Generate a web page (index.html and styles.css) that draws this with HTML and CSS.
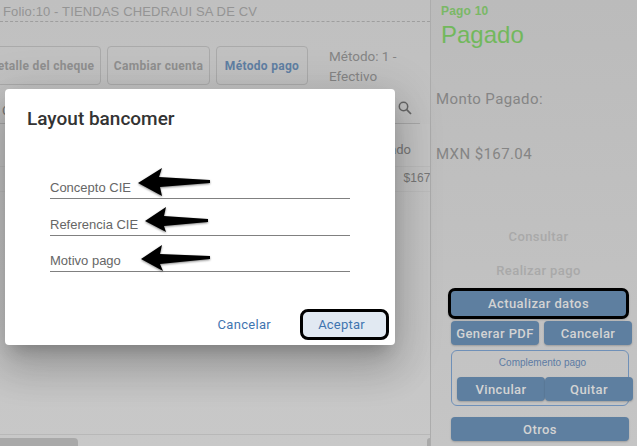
FILE: index.html
```html
<!DOCTYPE html>
<html lang="es">
<head>
<meta charset="utf-8">
<title>Pago 10</title>
<link rel="stylesheet" href="styles.css">
</head>
<body>
<div class="page">
  <main class="main">
    <h1 class="folio">Folio:10 - TIENDAS CHEDRAUI SA DE CV</h1>
    <div class="toolbar">
      <button class="tool tool-a">Detalle del cheque</button>
      <button class="tool tool-b">Cambiar cuenta</button>
      <button class="tool tool-c">Método pago</button>
      <p class="method">Método: 1 - Efectivo</p>
    </div>
    <div class="search">
      <span class="search-text">C</span>
      <svg class="search-icon" width="16" height="16" viewBox="0 0 16 16"><circle cx="6.5" cy="6.5" r="4.2" fill="none" stroke="#666" stroke-width="1.5"/><path d="M9.7 9.7L14 14" stroke="#666" stroke-width="1.7"/></svg>
    </div>
    <div class="table-head"><span>Estado</span></div>
    <div class="table-row"><span>$167.04</span></div>
    <div class="spacer"></div>
    <div class="scroll"><div class="thumb"></div><div class="thumb-end"></div></div>
  </main>
  <aside class="side">
    <div class="pago">Pago 10</div>
    <div class="status">Pagado</div>
    <div class="monto">Monto Pagado:</div>
    <div class="amount">MXN $167.04</div>
    <div class="ghost first">Consultar</div>
    <div class="ghost second">Realizar pago</div>
    <button class="act act-focus">Actualizar datos</button>
    <div class="pair">
      <button class="act">Generar PDF</button>
      <button class="act">Cancelar</button>
    </div>
    <div class="group">
      <div class="group-title">Complemento pago</div>
      <div class="group-row">
        <button class="act">Vincular</button>
        <button class="act">Quitar</button>
      </div>
    </div>
    <button class="act otros">Otros</button>
  </aside>
  <section class="dialog">
    <h2 class="dialog-title">Layout bancomer</h2>
    <div class="fields">
      <div class="field f1">Concepto CIE</div>
      <div class="field f2">Referencia CIE</div>
      <div class="field f3">Motivo pago</div>
    </div>
    <div class="actions">
      <button class="btn-text">Cancelar</button>
      <button class="btn-accept">Aceptar</button>
    </div>
  </section>
  <svg class="arrows" width="637" height="446" viewBox="0 0 637 446">
    <defs><filter id="s" x="-20%" y="-20%" width="140%" height="150%"><feDropShadow dx="0" dy="1" stdDeviation="1" flood-color="#000" flood-opacity=".45"/></filter></defs>
    <path filter="url(#s)" d="M138 183L162 168L159 177L210 180L210 183L160 187L162 196Z"/>
    <path filter="url(#s)" d="M145 221L166 207L164 216L208 219L208 222L164 226L166 232Z"/>
    <path filter="url(#s)" d="M141 259L162 245L160 254L210 256L210 259L160 264L163 271Z"/>
  </svg>
</div>
</body>
</html>
```

FILE: styles.css
```css
* { box-sizing: border-box; }
html, body { margin: 0; height: 100%; }
body { font-family: Roboto, "Liberation Sans", sans-serif; background: #c6c6c6; overflow: hidden; }
button { font-family: inherit; cursor: pointer; }

.page { position: relative; display: flex; width: 637px; height: 446px; overflow: hidden; }

.main { width: 430px; flex: none; display: flex; flex-direction: column; background: linear-gradient(#c0c0c0, #c8c8c8); overflow: hidden; }
.folio { margin: 0; padding: 5px 0 0 3px; height: 22px; font: 400 13px/14px "Liberation Sans", sans-serif; letter-spacing: .14px; color: #949494; border-bottom: 1px dashed #9e9e9e; }

.toolbar { display: flex; align-items: flex-start; gap: 6px; margin-top: 24px; margin-left: -17px; height: 43px; }
.tool { flex: none; height: 39px; border: 1px solid #aaa; border-radius: 4px; background: transparent; font-size: 12px; font-weight: 700; letter-spacing: .3px; color: #8f8f8f; padding: 0; }
.tool-a { width: 118px; }
.tool-b { width: 103px; }
.tool-c { width: 92px; color: #5f7fa3; }
.method { margin: 0 0 0 15px; width: 90px; font-size: 13.5px; line-height: 20px; color: #858585; }

.search { display: flex; justify-content: space-between; align-items: center; width: 420px; height: 35px; padding: 8px 7px 0 2px; border-bottom: 1px solid #a8a8a8; color: #777; font-size: 13px; }
.search-icon { margin-top: -4px; }

.table-head { height: 43px; display: flex; justify-content: flex-end; align-items: flex-end; padding: 0 19px 9px 0; border-bottom: 1px solid #bbb; background: #c4c4c4; font-size: 13px; color: #777; }
.table-row { height: 25px; display: flex; justify-content: flex-end; align-items: center; padding: 0 0 3px; border-bottom: 1px solid #bcbcbc; font: 12px "Liberation Sans", sans-serif; color: #777; }
.table-row span { margin-right: -17px; }
.spacer { flex: 1; border-bottom: 1px solid #b8b8b8; margin-bottom: 3px; }
.scroll { height: 8px; flex: none; display: flex; justify-content: space-between; }
.thumb { width: 78px; height: 8px; background: #a9a9a9; border-radius: 0 4px 0 0; }
.thumb-end { width: 3px; height: 8px; background: #a9a9a9; border-radius: 3px 0 0 0; }

.side { flex: 1; position: relative; border-left: 1px solid #acacac; background: linear-gradient(#bbb, #c5c5c5); padding-left: 5px; display: flex; flex-direction: column; align-items: flex-start; }
.pago { margin: 3px 0 0 5px; font: 700 12px/16px "Liberation Sans", sans-serif; letter-spacing: .2px; color: #7ab866; }
.status { margin: 2px 0 0 5px; font: 400 24px/28px "Liberation Sans", sans-serif; color: #72b85c; }
.monto { margin-top: 40px; font-size: 15px; line-height: 20px; letter-spacing: .4px; color: #858585; }
.amount { margin-top: 35px; font-size: 15px; line-height: 20px; letter-spacing: .4px; color: #858585; }
.ghost { width: 181px; margin-left: 12px; text-align: center; font-size: 13px; font-weight: 500; line-height: 18px; letter-spacing: .4px; color: #a9a9a9; }
.ghost.first { margin-top: 64px; }
.ghost.second { margin-top: 16px; }

.act { height: 24px; flex: 1; padding: 0; border: 0; border-radius: 4px; background: #5e7fa0; color: #d3d3d3; font-size: 13px; font-weight: 500; letter-spacing: .4px; box-shadow: 0 1px 2px rgba(0,0,0,.2); }
.act-focus { flex: none; width: 181px; height: 31px; margin: 8px 0 0 12px; border: 3px solid #000; border-radius: 7px; }
.pair { display: flex; gap: 5px; width: 181px; margin: 2px 0 0 15px; }
.group { margin: 5px 0 0 15px; padding: 0 0 5px 5px; width: 178px; height: 56px; border: 1px solid #6f90b8; border-radius: 6px; }
.group-title { font: 10px/12px "Liberation Sans", sans-serif; text-align: center; color: #5d7ba3; margin-top: 6px; }
.group-row { display: flex; width: 176px; margin-top: 8px; }
.otros { flex: none; width: 178px; margin: 11px 0 0 15px; }

.dialog { position: absolute; left: 5px; top: 89px; width: 390px; height: 256px; background: #fff; border-radius: 4px; box-shadow: 0 11px 15px -7px rgba(0,0,0,.2), 0 24px 38px 3px rgba(0,0,0,.14), 0 9px 46px 8px rgba(0,0,0,.12); display: flex; flex-direction: column; }
.dialog-title { margin: 17px 0 0 22px; font-size: 19px; line-height: 26px; font-weight: 500; color: #333; }
.fields { margin: 46px 45px 0; }
.field { border-bottom: 1px solid #808080; height: 37px; padding-top: 18px; font: 13px/16px "Liberation Sans", sans-serif; color: #666; }
.field.f1 { height: 21px; padding-top: 2px; }
.field.f3 { height: 36px; padding-top: 17px; }
.actions { margin-top: auto; padding: 0 6px 5px 0; display: flex; justify-content: flex-end; align-items: center; }
.btn-text { border: 0; background: none; padding: 0; margin-right: 29px; font-size: 13px; letter-spacing: .3px; color: #3f75b0; }
.btn-accept { width: 89px; height: 31px; padding: 0 6px 0 0; border: 3px solid #000; border-radius: 8px; background: #e1e9f2; font-size: 13px; letter-spacing: .2px; color: #3f75b0; }

.arrows { position: absolute; left: 0; top: 0; pointer-events: none; }
```
